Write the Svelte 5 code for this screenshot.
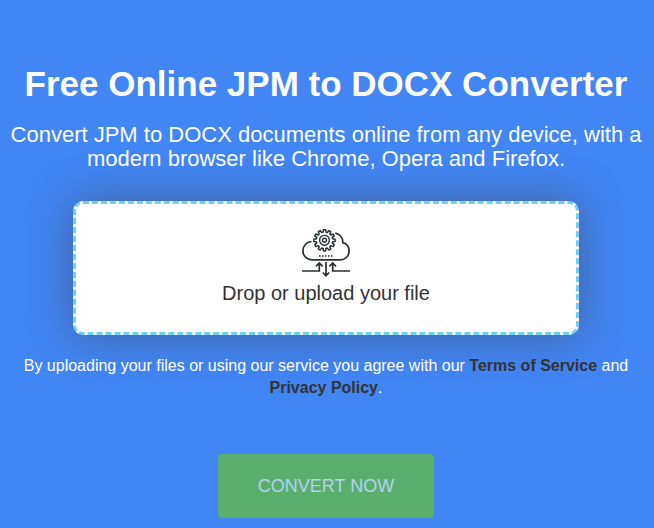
<script>
  const teeth = Array.from({ length: 12 }, (_, i) => i * 30);
  const point = (r, deg) => {
    const a = (deg * Math.PI) / 180;
    return `${(22.5 + r * Math.sin(a)).toFixed(2)} ${(11.3 - r * Math.cos(a)).toFixed(2)}`;
  };
  const gear = 'M' + teeth.map((t) => [point(8.3, t - 10), point(10.7, t - 6), point(10.7, t + 6), point(8.3, t + 10)].join('L')).join('L') + 'Z';
</script>

<main>
  <h1>Free Online JPM to DOCX Converter</h1>
  <h2>Convert JPM to DOCX documents online from any device, with a<br />modern browser like Chrome, Opera and Firefox.</h2>
  <div class="drop">
    <svg viewBox="0 0 48 48" width="48" height="48" fill="none" stroke="#263030" stroke-width="1.7">
      <path d={gear} stroke-width="1.5" stroke-linejoin="round" />
      <circle cx="22.5" cy="11.3" r="4.9" stroke-width="1.4" />
      <circle cx="22.5" cy="11.3" r="2" stroke-width="1.4" />
      <path d="M9.5 12.7C4.5 12.7 .9 17 .9 21.8c0 5.1 4 9 9 9h28.5c4.9 0 8.7-3.9 8.7-8.7 0-4.2-2.6-7.6-6.3-8.5C41 9 38 5.2 33.3 4.2" />
      <path d="M17 27h14" stroke-dasharray="1.6 1.4" stroke-width="1.5" />
      <path stroke-width="1.7" d="M0 42h17.3V34M14 37.3l3.3-3.3 3.3 3.3M48 42H30.7V34M27.4 37.3l3.3-3.3L34 37.3M24 33v13.5M20.8 43.5l3.2 3.2 3.2-3.2" />
    </svg>
    <span>Drop or upload your file</span>
  </div>
  <p>By uploading your files or using our service you agree with our <b>Terms of Service</b> and<br /><b>Privacy Policy</b>.</p>
  <button>CONVERT NOW</button>
</main>

<style>
  :global(body) { background: #4285f4; }
  main {
    box-sizing: border-box;
    width: 654px;
    height: 528px;
    padding: 64px 2px 0 0;
    display: flex;
    flex-direction: column;
    align-items: center;
    overflow: hidden;
    background: #4285f4;
    color: #fff;
    font-family: "Liberation Sans", Arial, sans-serif;
    text-align: center;
    white-space: nowrap;
  }
  h1 { margin: 0; font-size: 35px; line-height: 40px; font-weight: 700; }
  h2 { margin: 19px 0 0; font-size: 22px; line-height: 24px; font-weight: 400; }
  .drop {
    box-sizing: border-box;
    width: 506px;
    height: 134px;
    margin: 30px 0 0;
    padding-top: 25px;
    display: flex;
    flex-direction: column;
    align-items: center;
    border: 3px dashed #6fcff5;
    border-radius: 10px;
    background: #fff;
    box-shadow: 0 0 40px rgba(67, 67, 67, 0.5);
    color: #333;
    font-size: 20px;
    line-height: 28px;
  }
  svg { display: block; flex: none; }
  span { margin-top: 2px; }
  p { position: relative; margin: 20px 0 0; font-size: 16px; line-height: 22px; }
  b { color: #333; }
  button {
    width: 216px;
    height: 64px;
    margin: 55px 0 0;
    padding: 0;
    border: 0;
    border-radius: 4px;
    background: #5aaf6d;
    color: #b3d1f3;
    font: 18px "Liberation Sans", Arial, sans-serif;
  }
</style>
